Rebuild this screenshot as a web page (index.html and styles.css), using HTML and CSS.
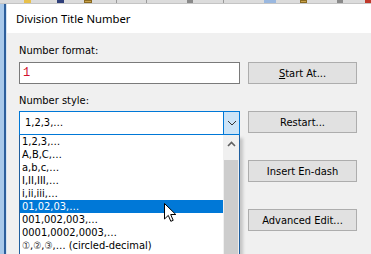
FILE: index.html
```html
<!DOCTYPE html>
<html lang="en">
<head>
  <meta charset="UTF-8">
  <title>Division Title Number</title>
  <link rel="stylesheet" href="styles.css">
</head>
<body>

<!-- bits of the app toolbar behind the dialog -->
<div class="toolbar">
  <span class="tb tb-yellow" style="margin-left:24px"></span>
  <span class="tb tb-navy" style="margin-left:26px"></span>
  <span class="tb tb-gold" style="margin-left:20px"></span>
  <span class="tb tb-sep" style="margin-left:24px"></span>
  <span class="tb tb-sep" style="margin-left:30px"></span>
  <span class="tb tb-gray" style="margin-left:40px"></span>
  <span class="tb tb-sep" style="margin-left:30px"></span>
  <span class="tb tb-blue" style="margin-left:40px"></span>
  <span class="tb tb-gold" style="margin-left:24px"></span>
  <span class="tb tb-gray" style="margin-left:30px"></span>
  <span class="tb tb-red" style="margin-left:22px"></span>
</div>

<div class="frame">
  <div class="edge"></div>

  <div class="dialog">
    <div class="titlebar">Division Title Number</div>

    <div class="content">
      <div class="left-col">
        <div class="label">Number format:</div>
        <div class="textbox"><span class="fmt">1</span></div>

        <div class="label label-style">Number style:</div>
        <div class="combo">
          <span class="combo-value">1,2,3,…</span>
          <span class="combo-btn">
            <svg width="10" height="6" viewBox="0 0 10 6"><path d="M1 1 L5 5 L9 1" fill="none" stroke="#333" stroke-width="1"/></svg>
          </span>
        </div>

        <div class="dropdown">
          <ul class="options" id="options"></ul>
          <div class="scrollbar">
            <div class="sb-up">
              <svg width="9" height="6" viewBox="0 0 9 6"><path d="M1 5 L4.5 1.5 L8 5" fill="none" stroke="#606060" stroke-width="1.6"/></svg>
            </div>
            <div class="sb-thumb"></div>
          </div>
        </div>
      </div>

      <div class="right-col">
        <button class="btn"><u>S</u>tart At...</button>
        <button class="btn">Restart...</button>
        <button class="btn">Insert En-dash</button>
        <button class="btn">Advanced Edit...</button>
      </div>
    </div>
  </div>
</div>

<!-- mouse pointer over the list -->
<svg class="cursor" width="13" height="20" viewBox="0 0 13 20">
  <path d="M0.5 0.5 L0.5 16 L4.3 12.4 L6.8 18.3 L9.2 17.3 L6.7 11.5 L11.8 11.5 Z" fill="#fff" stroke="#000" stroke-width="1"/>
</svg>

<script>
  const styles = [
    '1,2,3,…', 'A,B,C,…', 'a,b,c,…', 'I,II,III,…', 'i,ii,iii,…',
    '01,02,03,…', '001,002,003,…', '0001,0002,0003,…',
    '<span class="circ">①</span>,<span class="circ">②</span>,<span class="circ">③</span>,… (circled-decimal)'
  ];
  const hovered = 5;
  const list = document.getElementById('options');
  styles.forEach((s, i) => {
    const li = document.createElement('li');
    li.className = 'option' + (i === hovered ? ' hot' : '');
    li.innerHTML = s;
    list.appendChild(li);
  });
</script>

</body>
</html>
```

FILE: styles.css
```css
body {
  margin: 0;
  padding: 0;
  width: 371px;
  height: 254px;
  overflow: hidden;
  background: #f0f0f0;
  font-family: 'DejaVu Sans Condensed', 'Liberation Sans', sans-serif;
  font-size: 11px;
  color: #000;
  position: relative;
}

.toolbar {
  height: 4px;
  background: #dcdcdc;
  border-bottom: 1px solid #c4c4c4;
  box-sizing: border-box;
  display: flex;
  align-items: stretch;
}

.tb {
  display: block;
  width: 8px;
}
.tb-yellow { background: #e8c04a; }
.tb-navy { background: #2f3f7a; }
.tb-gold { background: #c9a24a; border: 1px solid #8a6a20; box-sizing: border-box; }
.tb-sep { width: 1px; background: #9a9a9a; }
.tb-gray { background: #8a8a8a; width: 6px; }
.tb-blue { background: #9ab8e0; width: 14px; }
.tb-red { background: #c0392b; width: 7px; }

.frame {
  display: flex;
  height: 250px;
}

.edge {
  width: 7px;
  flex: none;
  background: linear-gradient(to right, #a9c9ea 0 4px, #2d5f9c 4px 6px, #d6e4f2 6px 7px);
}

.dialog {
  flex: 1;
  display: flex;
  flex-direction: column;
}

.titlebar {
  height: 30px;
  line-height: 29px;
  background: #fff;
  padding-left: 9px;
  font-family: 'Noto Sans', 'Open Sans', sans-serif;
  font-size: 11.3px;
}

.content {
  flex: 1;
  display: flex;
  gap: 8px;
  padding: 10px 0 0 12px;
  background: #f0f0f0;
}

.left-col {
  width: 221px;
  display: flex;
  flex-direction: column;
}

.label {
  line-height: 16px;
  margin-bottom: 3px;
}

.label-style {
  margin-top: 9px;
  margin-bottom: 2px;
}

.textbox {
  height: 22px;
  box-sizing: border-box;
  background: #fff;
  border: 1px solid #7a7a7a;
  padding: 0 3px;
  line-height: 20px;
}

.fmt {
  font-family: 'Liberation Mono', monospace;
  font-size: 12px;
  color: #d0102c;
}

.combo {
  height: 24px;
  box-sizing: border-box;
  background: #fff;
  border: 1px solid #0078d7;
  display: flex;
  align-items: stretch;
}

.combo-value {
  flex: 1;
  padding-left: 5px;
  line-height: 22px;
}

.combo-btn {
  width: 15px;
  background: #cce4f7;
  border-left: 1px solid #0078d7;
  display: flex;
  align-items: center;
  justify-content: center;
}

.dropdown {
  position: relative;
  height: 130px;
  background: #fff;
  border: 1px solid #1f5f9f;
  border-top: none;
  box-shadow: 3px 3px 3px rgba(0, 0, 0, 0.18);
  display: flex;
  overflow: hidden;
}

.options {
  list-style: none;
  margin: 0;
  padding: 0;
  flex: 1;
}

.option {
  height: 13px;
  line-height: 13px;
  padding-left: 2px;
  white-space: nowrap;
}

.option.hot {
  background: #0078d7;
  color: #fff;
}

.circ {
  font-size: 10px;
  color: #333;
}

.scrollbar {
  width: 16px;
  background: #f0f0f0;
  display: flex;
  flex-direction: column;
}

.sb-up {
  height: 17px;
  display: flex;
  align-items: center;
  justify-content: center;
}

.sb-thumb {
  margin-top: 8px;
  flex: 1;
  background: #cdcdcd;
  margin-left: 1px;
  margin-right: 1px;
}

.right-col {
  width: 109px;
  display: flex;
  flex-direction: column;
  gap: 27px;
  padding-top: 19px;
}

.btn {
  height: 22px;
  width: 109px;
  background: #e1e1e1;
  border: 1px solid #adadad;
  font-family: 'DejaVu Sans Condensed', 'Liberation Sans', sans-serif;
  font-size: 11px;
  color: #000;
  padding: 0;
}

.cursor {
  position: absolute;
  left: 164px;
  top: 203px;
}
```
